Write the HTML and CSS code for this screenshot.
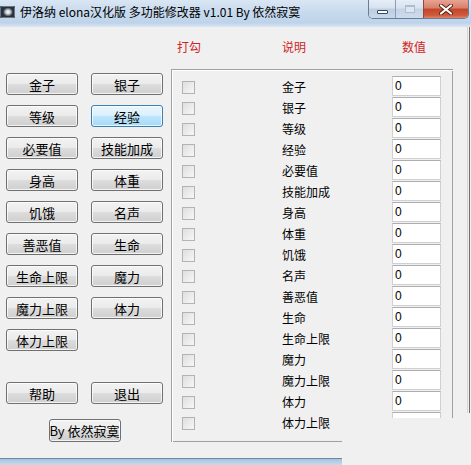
FILE: index.html
```html
<!DOCTYPE html>
<html lang="zh-CN">
<head>
<meta charset="utf-8">
<title>伊洛纳 elona汉化版 多功能修改器</title>
<link rel="stylesheet" href="styles.css">
</head>
<body>
<div class="window">
  <div class="titlebar">
    <svg class="app-icon" viewBox="0 0 15 12" width="15" height="12">
      <defs>
        <radialGradient id="glow" cx="50%" cy="50%" r="50%">
          <stop offset="0" stop-color="#ffffff"/>
          <stop offset="0.45" stop-color="#c9d0d8"/>
          <stop offset="1" stop-color="#2a3440"/>
        </radialGradient>
      </defs>
      <rect x="0" y="0" width="15" height="12" rx="1" fill="#28313c"/>
      <rect x="0.5" y="0.5" width="14" height="11" rx="1" fill="none" stroke="#6b7684"/>
      <ellipse cx="8" cy="6" rx="5" ry="4.5" fill="url(#glow)"/>
    </svg>
    <div class="title">伊洛纳 elona汉化版 多功能修改器 v1.01 By 依然寂寞</div>
    <div class="caption-buttons">
      <div class="cb min"><span class="min-glyph"></span></div>
      <div class="cb max"><span class="max-glyph"></span></div>
      <div class="cb close">
        <svg viewBox="0 0 14 11" width="14" height="11">
          <path d="M2 1.5 L12 9.5 M12 1.5 L2 9.5" stroke="#5a2418" stroke-width="4" stroke-linecap="round"/>
          <path d="M2 1.5 L12 9.5 M12 1.5 L2 9.5" stroke="#ffffff" stroke-width="2.2" stroke-linecap="round"/>
        </svg>
      </div>
    </div>
  </div>

  <div class="client">
    <div class="left">
      <div class="btn-grid">
        <button class="btn">金子</button>
        <button class="btn">银子</button>
        <button class="btn">等级</button>
        <button class="btn hot">经验</button>
        <button class="btn">必要值</button>
        <button class="btn">技能加成</button>
        <button class="btn">身高</button>
        <button class="btn">体重</button>
        <button class="btn">饥饿</button>
        <button class="btn">名声</button>
        <button class="btn">善恶值</button>
        <button class="btn">生命</button>
        <button class="btn">生命上限</button>
        <button class="btn">魔力</button>
        <button class="btn">魔力上限</button>
        <button class="btn">体力</button>
        <button class="btn">体力上限</button>
      </div>
      <div class="btn-row">
        <button class="btn">帮助</button>
        <button class="btn">退出</button>
      </div>
      <div class="by-row">
        <button class="btn tall">By 依然寂寞</button>
      </div>
    </div>

    <div class="right">
      <div class="headers">
        <span class="h1">打勾</span>
        <span class="h2">说明</span>
        <span class="h3">数值</span>
      </div>
      <div class="panel">
        <div class="row"><div class="c1"><input type="checkbox" class="chk"></div><div class="c2">金子</div><div class="c3"><input class="num" type="text" value="0"></div></div>
        <div class="row"><div class="c1"><input type="checkbox" class="chk"></div><div class="c2">银子</div><div class="c3"><input class="num" type="text" value="0"></div></div>
        <div class="row"><div class="c1"><input type="checkbox" class="chk"></div><div class="c2">等级</div><div class="c3"><input class="num" type="text" value="0"></div></div>
        <div class="row"><div class="c1"><input type="checkbox" class="chk"></div><div class="c2">经验</div><div class="c3"><input class="num" type="text" value="0"></div></div>
        <div class="row"><div class="c1"><input type="checkbox" class="chk"></div><div class="c2">必要值</div><div class="c3"><input class="num" type="text" value="0"></div></div>
        <div class="row"><div class="c1"><input type="checkbox" class="chk"></div><div class="c2">技能加成</div><div class="c3"><input class="num" type="text" value="0"></div></div>
        <div class="row"><div class="c1"><input type="checkbox" class="chk"></div><div class="c2">身高</div><div class="c3"><input class="num" type="text" value="0"></div></div>
        <div class="row"><div class="c1"><input type="checkbox" class="chk"></div><div class="c2">体重</div><div class="c3"><input class="num" type="text" value="0"></div></div>
        <div class="row"><div class="c1"><input type="checkbox" class="chk"></div><div class="c2">饥饿</div><div class="c3"><input class="num" type="text" value="0"></div></div>
        <div class="row"><div class="c1"><input type="checkbox" class="chk"></div><div class="c2">名声</div><div class="c3"><input class="num" type="text" value="0"></div></div>
        <div class="row"><div class="c1"><input type="checkbox" class="chk"></div><div class="c2">善恶值</div><div class="c3"><input class="num" type="text" value="0"></div></div>
        <div class="row"><div class="c1"><input type="checkbox" class="chk"></div><div class="c2">生命</div><div class="c3"><input class="num" type="text" value="0"></div></div>
        <div class="row"><div class="c1"><input type="checkbox" class="chk"></div><div class="c2">生命上限</div><div class="c3"><input class="num" type="text" value="0"></div></div>
        <div class="row"><div class="c1"><input type="checkbox" class="chk"></div><div class="c2">魔力</div><div class="c3"><input class="num" type="text" value="0"></div></div>
        <div class="row"><div class="c1"><input type="checkbox" class="chk"></div><div class="c2">魔力上限</div><div class="c3"><input class="num" type="text" value="0"></div></div>
        <div class="row"><div class="c1"><input type="checkbox" class="chk"></div><div class="c2">体力</div><div class="c3"><input class="num" type="text" value="0"></div></div>
        <div class="row"><div class="c1"><input type="checkbox" class="chk"></div><div class="c2">体力上限</div><div class="c3"><div class="num-clip"></div></div></div>
      </div>
    </div>
  </div>

  <div class="bottom-frame"></div>
</div>
</body>
</html>
```

FILE: styles.css
```css
* { box-sizing: border-box; }

html, body {
  margin: 0;
  padding: 0;
  background: #f0f0f0;
}

body {
  width: 471px;
  height: 465px;
  overflow: hidden;
  font-family: "Noto Sans CJK SC", "Liberation Sans", sans-serif;
  font-size: 12px;
  color: #000;
}

.window {
  width: 471px;
  height: 465px;
  display: flex;
  flex-direction: column;
}

/* ---------- title bar ---------- */
.titlebar {
  height: 27px;
  flex: none;
  display: flex;
  align-items: flex-start;
  padding-right: 2px;
  background: linear-gradient(#d9e6f4, #c9dbee 40%, #bed3ea 85%, #dbe6f2);
}

.app-icon {
  flex: none;
  margin-top: 6px;
  display: block;
}

.title {
  flex: 1;
  margin-left: 5px;
  line-height: 24px;
  font-size: 12px;
  white-space: nowrap;
  color: #000;
}

.caption-buttons {
  flex: none;
  display: flex;
  height: 19px;
  border: 1px solid #6a7d97;
  border-top: none;
  border-radius: 0 0 5px 5px;
  overflow: hidden;
}

.cb {
  height: 100%;
  display: flex;
  align-items: center;
  justify-content: center;
}

.cb.min {
  width: 26px;
  background: linear-gradient(#e6eef7, #d6e2ef 45%, #bdcee2 50%, #c9d8e9);
}

.cb.max {
  width: 28px;
  border-left: 1px solid #8b9cb3;
  background: linear-gradient(#e6eef7, #d6e2ef 45%, #c3d3e6 50%, #cfdcec);
}

.cb.close {
  width: 45px;
  border-left: 1px solid #8a4b40;
  background: linear-gradient(#e8a392, #d7806b 45%, #c4442a 50%, #cf5a3c 85%, #e0846a);
}

.min-glyph {
  width: 11px;
  height: 4px;
  margin-top: 5px;
  background: #fff;
  border: 1px solid #37475d;
  border-radius: 1px;
}

.max-glyph {
  width: 10px;
  height: 8px;
  border: 1px solid #aebdd1;
  border-top-width: 2px;
  background: #dde6f1;
}

.cb.close svg { display: block; }

/* ---------- client ---------- */
.client {
  height: 431px;
  flex: none;
  display: flex;
  background:
    linear-gradient(#d6d6d6, #d6d6d6) 467px 0 / 1px 386px no-repeat,
    linear-gradient(#707070, #707070) 469px 0 / 1px 386px no-repeat,
    #f0f0f0;
}

.left {
  width: 170px;
  flex: none;
  padding: 46px 0 0 6px;
}

.btn-grid {
  display: grid;
  grid-template-columns: 72px 72px;
  column-gap: 13px;
  row-gap: 10px;
}

.btn {
  width: 72px;
  height: 22px;
  margin: 0;
  padding: 0;
  border: 1px solid #707070;
  border-radius: 3px;
  background: linear-gradient(#f2f2f2, #ebebeb 49%, #dddddd 50%, #cfcfcf);
  box-shadow: inset 0 0 0 1px rgba(255, 255, 255, 0.75);
  font-family: "Noto Sans CJK SC", "Liberation Sans", sans-serif;
  font-size: 13px;
  line-height: 19px;
  color: #000;
  text-align: center;
  white-space: nowrap;
}

.btn.hot {
  border-color: #3c7fb1;
  background: linear-gradient(#eaf6fd, #d9f0fc 49%, #bee6fd 50%, #a7d9f5);
}

.btn.tall { height: 23px; }

.btn-row {
  display: flex;
  gap: 13px;
  margin-top: 31px;
}

.by-row {
  width: 157px;
  display: flex;
  justify-content: center;
  margin-top: 15px;
}

/* ---------- right side ---------- */
.right {
  flex: 1;
}

.headers {
  display: flex;
  margin-top: 12px;
  padding-left: 7px;
  line-height: 16px;
  font-size: 12px;
  color: #d02424;
}

.h1 { width: 105px; }
.h2 { width: 120px; }

.panel {
  width: 282px;
  height: 373px;
  margin: 14px 0 0 1px;
  padding-top: 6px;
  border-top: 1px solid #a0a0a0;
  border-left: 1px solid #a0a0a0;
  box-shadow: inset 1px 1px 0 #ffffff;
  background:
    linear-gradient(#a0a0a0, #a0a0a0) right top / 1px 349px no-repeat,
    linear-gradient(#a0a0a0, #a0a0a0) left bottom / 171px 1px no-repeat;
  background-origin: border-box;
}

.row {
  display: flex;
  height: 21px;
}

.c1 {
  width: 110px;
  padding: 5px 0 0 10px;
}

.chk {
  appearance: none;
  -webkit-appearance: none;
  display: block;
  margin: 0;
  width: 13px;
  height: 13px;
  border: 1px solid #b3b3b3;
  background: linear-gradient(135deg, #dedede, #f7f7f7);
}

.c2 {
  width: 110px;
  line-height: 22px;
  font-size: 12px;
  white-space: nowrap;
}

.num {
  display: block;
  width: 49px;
  height: 20px;
  margin: 0;
  padding: 0 0 0 2px;
  border: 1px solid #d0d0d0;
  border-top-color: #abadb3;
  background: #fff;
  font-family: "Liberation Sans", sans-serif;
  font-size: 12px;
  color: #000;
}

.num-clip {
  width: 49px;
  height: 6px;
  border: 1px solid #d0d0d0;
  border-top-color: #abadb3;
  border-bottom: none;
  background: #fff;
}

/* ---------- bottom frame ---------- */
.bottom-frame {
  width: 342px;
  height: 7px;
  flex: none;
  background: linear-gradient(#6c88a8 0, #6c88a8 1px, #a9c2dd 1px, #c8daee);
}
```
